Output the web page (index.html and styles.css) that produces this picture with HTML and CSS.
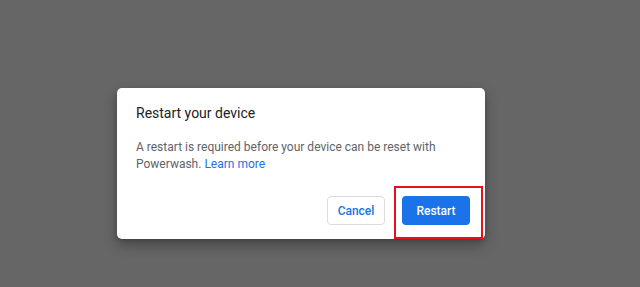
FILE: index.html
```html
<!DOCTYPE html>
<html>
<head>
<meta charset="utf-8">
<link rel="stylesheet" href="styles.css">
</head>
<body>
<div class="screen">
  <div class="dialog">
    <div class="title">Restart your device</div>
    <div class="body">A restart is required before your device can be reset with Powerwash. <a class="link" href="#">Learn more</a></div>
    <div class="actions">
      <button class="btn cancel">Cancel</button>
      <div class="highlight-wrap">
        <button class="btn primary">Restart</button>
        <div class="highlight"></div>
      </div>
    </div>
  </div>
</div>
</body>
</html>
```
FILE: styles.css
```css
html, body {
  margin: 0;
  padding: 0;
  background: #666666;
  height: 100%;
}
.screen {
  padding: 88px 0 0 117px;
  font-family: Roboto, "Noto Sans", sans-serif;
}
.dialog {
  width: 368px;
  box-sizing: border-box;
  background: #ffffff;
  border-radius: 5px;
  padding: 15px 15px 14px 19px;
  box-shadow: 0 6px 14px rgba(0,0,0,0.3), 0 2px 4px rgba(0,0,0,0.15);
}
.title {
  font-size: 14px;
  line-height: 20px;
  color: #202124;
}
.body {
  margin-top: 16px;
  font-size: 12px;
  line-height: 17px;
  color: #5f6368;
  padding-right: 10px;
}
.link {
  color: #1a73e8;
  text-decoration: none;
}
.actions {
  margin-top: 23px;
  display: flex;
  justify-content: flex-end;
  gap: 17px;
}
.btn {
  font-family: Roboto, "Noto Sans", sans-serif;
  font-size: 12px;
  font-weight: 500;
  height: 29px;
  border-radius: 4px;
  cursor: pointer;
}
.cancel {
  background: #ffffff;
  color: #1a73e8;
  border: 1px solid #dadce0;
  width: 58px;
  padding: 0;
}
.primary {
  background: #1a73e8;
  color: #ffffff;
  border: none;
  width: 68px;
  padding: 0;
}
.highlight-wrap {
  position: relative;
  display: flex;
}
.highlight {
  position: absolute;
  left: -8px;
  top: -10px;
  right: -13px;
  bottom: -14px;
  border: 2px solid #e8101c;
  pointer-events: none;
}
```
